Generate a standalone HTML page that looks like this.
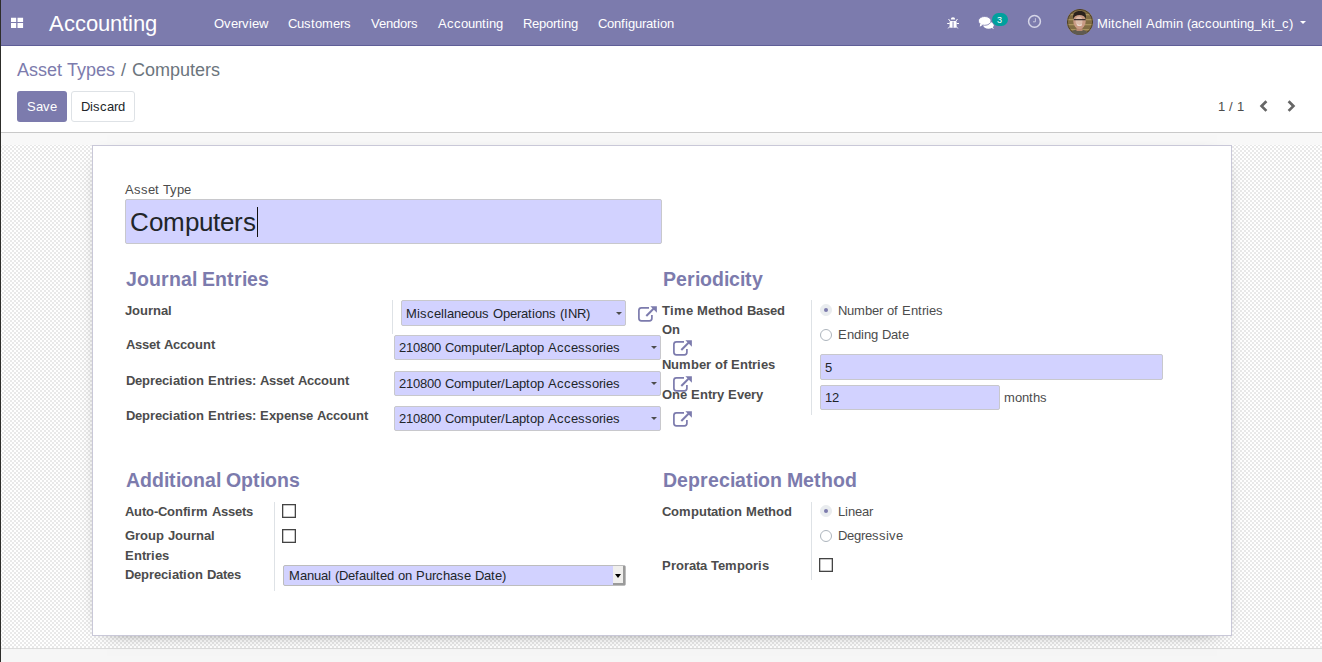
<!DOCTYPE html>
<html><head><meta charset="utf-8">
<style>
*{box-sizing:border-box;margin:0;padding:0}
html,body{width:1322px;height:662px;overflow:hidden;background:#fff}
body{font-family:"Liberation Sans",sans-serif;font-size:13px;color:#4c4c4c;position:relative}
.a{position:absolute;white-space:nowrap;line-height:normal}
#nav{position:absolute;left:0;top:0;width:1322px;height:46px;background:#7c7bad;border-bottom:1px solid #5f5e97}
#nav .t{position:absolute;color:#fff;font-size:13px;top:16px;line-height:normal;white-space:nowrap}
#lb{position:absolute;left:0;top:0;width:1px;height:662px;background:#2d2d2a}
#cp{position:absolute;left:0;top:46px;width:1322px;height:87px;background:#fff;border-bottom:1px solid #c9c9c9}
#band{position:absolute;left:0;top:133px;width:1322px;height:12px;background:#f8f8f8}
#bg{position:absolute;left:0;top:145px;width:1322px;height:503px;background-color:#fff;
 background-image:repeating-conic-gradient(#e9e9e9 0% 25%,#fff 0% 50%);background-size:4px 4px;background-position:0 -1px}
#foot{position:absolute;left:0;top:648px;width:1322px;height:14px;background:#f6f6f6;border-top:1px solid #dcdcdc}
#sheet{position:absolute;left:92px;top:145px;width:1140px;height:491px;background:#fff;border:1px solid #c9c8d8;box-shadow:0 5px 20px -15px #000}
.lbl{position:absolute;font-weight:bold;color:#4c4c4c;font-size:13px;line-height:normal;white-space:nowrap}
.h{position:absolute;font-weight:bold;color:#7c7bad;font-size:19.5px;line-height:normal;white-space:nowrap}
.inp{position:absolute;background:#d2d2ff;border:1px solid #c8c8cc;border-radius:2px}
.tx{position:absolute;font-size:13px;color:#212529;line-height:normal;white-space:nowrap}
.car{position:absolute;width:0;height:0;border-left:3px solid transparent;border-right:3px solid transparent;border-top:3px solid #4c4c4c}
.vl{position:absolute;width:1px;background:#dee2e6}
.rt{position:absolute;font-size:13px;color:#4c4c4c;line-height:normal;white-space:nowrap}
.rd{position:absolute;width:12px;height:12px;border:1px solid #adb5bd;border-radius:50%;background:#fff}
.rd.on{background:#e9ecef;border-color:#e9ecef}
.rd.on::after{content:"";position:absolute;left:3px;top:3px;width:4px;height:4px;border-radius:50%;background:#7c7bad}
i{display:inline-block;font-style:normal;text-align:left}
svg.ic{position:absolute;overflow:visible}
</style></head><body>
<div id="nav">
  <svg class="ic" style="left:0;top:0" width="30" height="30" viewBox="0 0 30 30"><path d="M11 17.8H16.2V22.1H11ZM17.5 17.8H23.1V22.1H17.5ZM11 23H16.2V28H11ZM17.5 23H23.1V28H17.5Z" fill="#fff"/></svg>
  <div class="a" style="left:49px;top:11px;font-size:22px;color:#fff"><i style="width:15px">A</i><i style="width:11px">c</i><i style="width:11px">c</i><i style="width:12px">o</i><i style="width:12px">u</i><i style="width:12px">n</i><i style="width:6px">t</i><i style="width:5px">i</i><i style="width:12px">n</i><i style="width:12px">g</i></div>
  <div class="t" style="left:214px"><i style="width:10px">O</i><i style="width:7px">v</i><i style="width:7px">e</i><i style="width:4px">r</i><i style="width:7px">v</i><i style="width:3px">i</i><i style="width:7px">e</i><i style="width:9px">w</i></div>
  <div class="t" style="left:288px"><i style="width:9px">C</i><i style="width:7px">u</i><i style="width:7px">s</i><i style="width:4px">t</i><i style="width:7px">o</i><i style="width:11px">m</i><i style="width:7px">e</i><i style="width:4px">r</i><i style="width:7px">s</i></div>
  <div class="t" style="left:371px"><i style="width:8px">V</i><i style="width:7px">e</i><i style="width:7px">n</i><i style="width:7px">d</i><i style="width:7px">o</i><i style="width:4px">r</i><i style="width:7px">s</i></div>
  <div class="t" style="left:438px"><i style="width:9px">A</i><i style="width:7px">c</i><i style="width:7px">c</i><i style="width:7px">o</i><i style="width:7px">u</i><i style="width:7px">n</i><i style="width:4px">t</i><i style="width:3px">i</i><i style="width:7px">n</i><i style="width:7px">g</i></div>
  <div class="t" style="left:523px"><i style="width:9px">R</i><i style="width:7px">e</i><i style="width:7px">p</i><i style="width:7px">o</i><i style="width:4px">r</i><i style="width:4px">t</i><i style="width:3px">i</i><i style="width:7px">n</i><i style="width:7px">g</i></div>
  <div class="t" style="left:598px"><i style="width:9px">C</i><i style="width:7px">o</i><i style="width:7px">n</i><i style="width:4px">f</i><i style="width:3px">i</i><i style="width:7px">g</i><i style="width:7px">u</i><i style="width:4px">r</i><i style="width:7px">a</i><i style="width:4px">t</i><i style="width:3px">i</i><i style="width:7px">o</i><i style="width:7px">n</i></div>

  <svg class="ic" style="left:946px;top:16px" width="14" height="14" viewBox="0 0 14 14">
    <path d="M4.8 3.4A2.2 2.2 0 0 1 9.2 3.4Z" fill="#fff"/>
    <rect x="3.6" y="4.9" width="7" height="6.9" rx="1.2" fill="#fff"/>
    <rect x="6.6" y="5.6" width="0.9" height="6.2" fill="#7c7bad"/>
    <path d="M2.5 3L4.2 5.2M11.5 3L9.8 5.2M1.2 7.5H3.6M10.6 7.5H13M2.2 12.4L4 10.4M11.8 12.4L10 10.4" stroke="#fff" stroke-width="1"/>
  </svg>
  <svg class="ic" style="left:978px;top:16px" width="18" height="14" viewBox="0 0 18 14">
    <ellipse cx="10.5" cy="9.2" rx="5.2" ry="3.6" fill="#fff"/>
    <path d="M13 11.5L16 13.2L14.2 10.2Z" fill="#fff"/>
    <ellipse cx="6.7" cy="4.9" rx="6.3" ry="4.4" fill="#fff" stroke="#7c7bad" stroke-width="0.8"/>
    <path d="M2.2 7.5L1.8 10.8L5 8.8Z" fill="#fff"/>
  </svg>
  <div class="a" style="left:992px;top:12.8px;width:16px;height:13.5px;border-radius:7px;background:#00a09d;color:#fff;font-size:9px;line-height:15px;padding-right:1px;text-align:center"><i style="width:5px">3</i></div>
  <svg class="ic" style="left:1027px;top:14px" width="15" height="15" viewBox="0 0 15 15">
    <circle cx="7.5" cy="7.4" r="5.9" fill="none" stroke="#d6d6e8" stroke-width="1.5"/>
    <path d="M8.4 4.2V7.8H6" fill="none" stroke="#cfcfe2" stroke-width="0.9"/>
  </svg>
  <svg class="ic" style="left:1067px;top:9px" width="26" height="26" viewBox="0 0 26 26">
    <defs><clipPath id="cl"><circle cx="13" cy="13" r="13"/></clipPath></defs>
    <g clip-path="url(#cl)">
      <rect width="26" height="26" fill="#806c42"/>
      <rect x="0" y="5" width="26" height="1.3" fill="#a8925e"/>
      <rect x="0" y="10" width="26" height="1.3" fill="#a8925e"/>
      <rect x="0" y="15" width="26" height="1.3" fill="#a8925e"/>
      <rect x="0" y="20" width="26" height="1.3" fill="#a8925e"/>
      <circle cx="13" cy="13" r="12.6" fill="none" stroke="#4a3e2a" stroke-width="1"/>
      <path d="M2 27C3 22 7 20.5 12 20.5S21 22 22 27Z" fill="#5f5a50"/>
      <rect x="9.5" y="17" width="6" height="5" fill="#b88870"/>
      <ellipse cx="12.5" cy="12.5" rx="6.2" ry="7.4" fill="#c99a84"/>
      <ellipse cx="12" cy="12" rx="3.5" ry="4.5" fill="#dcbcaa"/>
      <path d="M6 10C5.5 4 8.5 2 13 2S19.5 4 19 10C18 7 15.5 6 12.5 6S7 7 6 10Z" fill="#2a221c"/>
      <path d="M6.8 10.6H18.6" stroke="#3a3030" stroke-width="1.1"/>
      <path d="M10 15.8Q12.5 17.3 15 15.8" stroke="#f2ece6" stroke-width="1" fill="none"/>
    </g>
  </svg>
  <div class="car" style="left:1300px;top:21px;border-left-width:3px;border-right-width:3px;border-top:3px solid #fff"></div>
  <div class="t" style="left:1097px"><i style="width:11px">M</i><i style="width:3px">i</i><i style="width:4px">t</i><i style="width:7px">c</i><i style="width:7px">h</i><i style="width:7px">e</i><i style="width:3px">l</i><i style="width:3px">l</i><i style="width:4px">&nbsp;</i><i style="width:9px">A</i><i style="width:7px">d</i><i style="width:11px">m</i><i style="width:3px">i</i><i style="width:7px">n</i><i style="width:4px">&nbsp;</i><i style="width:4px">(</i><i style="width:7px">a</i><i style="width:7px">c</i><i style="width:7px">c</i><i style="width:7px">o</i><i style="width:7px">u</i><i style="width:7px">n</i><i style="width:4px">t</i><i style="width:3px">i</i><i style="width:7px">n</i><i style="width:7px">g</i><i style="width:7px">_</i><i style="width:7px">k</i><i style="width:3px">i</i><i style="width:4px">t</i><i style="width:7px">_</i><i style="width:7px">c</i><i style="width:4px">)</i></div>
</div>
<div id="cp">
  <div class="a" style="left:17px;top:14px;font-size:18px"><span style="color:#7c7bad"><i style="width:12px">A</i><i style="width:9px">s</i><i style="width:9px">s</i><i style="width:10px">e</i><i style="width:5px">t</i><i style="width:5px">&nbsp;</i><i style="width:10px">T</i><i style="width:9px">y</i><i style="width:10px">p</i><i style="width:10px">e</i><i style="width:9px">s</i></span></div>
  <div class="a" style="left:121px;top:14px;font-size:18px;color:#6c757d"><i style="width:5px">/</i></div>
  <div class="a" style="left:132px;top:14px;font-size:18px;color:#6c757d"><i style="width:13px">C</i><i style="width:10px">o</i><i style="width:15px">m</i><i style="width:10px">p</i><i style="width:10px">u</i><i style="width:5px">t</i><i style="width:10px">e</i><i style="width:6px">r</i><i style="width:9px">s</i></div>
  <div class="a" style="left:17px;top:45px;width:50px;height:31px;background:#7c7bad;border-radius:3px;color:#fff;line-height:31px;text-align:center"><i style="width:9px">S</i><i style="width:7px">a</i><i style="width:7px">v</i><i style="width:7px">e</i></div>
  <div class="a" style="left:71px;top:45px;width:64px;height:31px;background:#fff;border:1px solid #dee2e6;border-radius:3px;color:#212529;line-height:29px;text-align:center"><i style="width:9px">D</i><i style="width:3px">i</i><i style="width:7px">s</i><i style="width:7px">c</i><i style="width:7px">a</i><i style="width:4px">r</i><i style="width:7px">d</i></div>
  <div class="a" style="left:1218px;top:53px;color:#4c4c4c"><i style="width:7px">1</i><i style="width:4px">&nbsp;</i><i style="width:4px">/</i><i style="width:4px">&nbsp;</i><i style="width:7px">1</i></div>
  <svg class="ic" style="left:1259px;top:53px" width="10" height="13" viewBox="0 0 10 13"><path d="M7.4 2.3L2.6 7.1L7.4 11.9" fill="none" stroke="#666" stroke-width="2.7"/></svg>
  <svg class="ic" style="left:1287px;top:53px" width="10" height="13" viewBox="0 0 10 13"><path d="M1.6 2.3L6.4 7.1L1.6 11.9" fill="none" stroke="#666" stroke-width="2.7"/></svg>

</div>
<div id="band"></div>
<div id="bg"></div>
<div id="foot"></div>
<div id="sheet"></div>

<div class="rt" style="left:125px;top:182px"><i style="width:9px">A</i><i style="width:7px">s</i><i style="width:7px">s</i><i style="width:7px">e</i><i style="width:4px">t</i><i style="width:4px">&nbsp;</i><i style="width:7px">T</i><i style="width:7px">y</i><i style="width:7px">p</i><i style="width:7px">e</i></div>
<div class="inp" style="left:125px;top:199px;width:537px;height:45px"></div>
<div class="a" style="left:130px;top:207px;font-size:26px;color:#212529"><i style="width:19px">C</i><i style="width:14px">o</i><i style="width:22px">m</i><i style="width:14px">p</i><i style="width:14px">u</i><i style="width:7px">t</i><i style="width:14px">e</i><i style="width:9px">r</i><i style="width:13px">s</i></div>
<div class="a" style="left:257px;top:207px;width:1px;height:30px;background:#111"></div>

<div class="h" style="left:126px;top:268px"><i style="width:11px">J</i><i style="width:12px">o</i><i style="width:12px">u</i><i style="width:8px">r</i><i style="width:12px">n</i><i style="width:11px">a</i><i style="width:5px">l</i><i style="width:5px">&nbsp;</i><i style="width:13px">E</i><i style="width:12px">n</i><i style="width:7px">t</i><i style="width:8px">r</i><i style="width:5px">i</i><i style="width:11px">e</i><i style="width:11px">s</i></div>
<div class="h" style="left:663px;top:268px"><i style="width:13px">P</i><i style="width:11px">e</i><i style="width:8px">r</i><i style="width:5px">i</i><i style="width:12px">o</i><i style="width:12px">d</i><i style="width:5px">i</i><i style="width:11px">c</i><i style="width:5px">i</i><i style="width:7px">t</i><i style="width:11px">y</i></div>

<div class="lbl" style="left:125px;top:303px"><i style="width:7px">J</i><i style="width:8px">o</i><i style="width:8px">u</i><i style="width:5px">r</i><i style="width:8px">n</i><i style="width:7px">a</i><i style="width:4px">l</i></div>
<div class="vl" style="left:392px;top:300px;height:34px"></div>
<div class="inp" style="left:401px;top:300px;width:225px;height:26px"></div>
<div class="tx" style="left:406px;top:306px"><i style="width:11px">M</i><i style="width:3px">i</i><i style="width:7px">s</i><i style="width:7px">c</i><i style="width:7px">e</i><i style="width:3px">l</i><i style="width:3px">l</i><i style="width:7px">a</i><i style="width:7px">n</i><i style="width:7px">e</i><i style="width:7px">o</i><i style="width:7px">u</i><i style="width:7px">s</i><i style="width:4px">&nbsp;</i><i style="width:10px">O</i><i style="width:7px">p</i><i style="width:7px">e</i><i style="width:4px">r</i><i style="width:7px">a</i><i style="width:4px">t</i><i style="width:3px">i</i><i style="width:7px">o</i><i style="width:7px">n</i><i style="width:7px">s</i><i style="width:4px">&nbsp;</i><i style="width:4px">(</i><i style="width:4px">I</i><i style="width:9px">N</i><i style="width:9px">R</i><i style="width:4px">)</i></div>
<div class="car" style="left:616px;top:312px"></div>
<svg class="ic" style="left:637px;top:305px" width="21" height="18" viewBox="0 0 21 18"><path d="M12 2.8H4.4A2.5 2.5 0 0 0 1.9 5.3V13.3A2.5 2.5 0 0 0 4.4 15.8H12.4A2.5 2.5 0 0 0 14.9 13.3V10" fill="none" stroke="#7c7bad" stroke-width="1.7"/><path d="M13.4 1.2H19.9V7.7Z" fill="#7c7bad"/><path d="M9.3 11L16.5 3.8" stroke="#7c7bad" stroke-width="2"/></svg>

<div class="lbl" style="left:126px;top:337px"><i style="width:9px">A</i><i style="width:7px">s</i><i style="width:7px">s</i><i style="width:7px">e</i><i style="width:4px">t</i><i style="width:4px">&nbsp;</i><i style="width:9px">A</i><i style="width:7px">c</i><i style="width:7px">c</i><i style="width:8px">o</i><i style="width:8px">u</i><i style="width:8px">n</i><i style="width:4px">t</i></div>
<div class="inp" style="left:394px;top:335px;width:267px;height:25px"></div>
<div class="tx" style="left:399px;top:340px"><i style="width:7px">2</i><i style="width:7px">1</i><i style="width:7px">0</i><i style="width:7px">8</i><i style="width:7px">0</i><i style="width:7px">0</i><i style="width:4px">&nbsp;</i><i style="width:9px">C</i><i style="width:7px">o</i><i style="width:11px">m</i><i style="width:7px">p</i><i style="width:7px">u</i><i style="width:4px">t</i><i style="width:7px">e</i><i style="width:4px">r</i><i style="width:4px">/</i><i style="width:7px">L</i><i style="width:7px">a</i><i style="width:7px">p</i><i style="width:4px">t</i><i style="width:7px">o</i><i style="width:7px">p</i><i style="width:4px">&nbsp;</i><i style="width:9px">A</i><i style="width:7px">c</i><i style="width:7px">c</i><i style="width:7px">e</i><i style="width:7px">s</i><i style="width:7px">s</i><i style="width:7px">o</i><i style="width:4px">r</i><i style="width:3px">i</i><i style="width:7px">e</i><i style="width:7px">s</i></div>
<div class="car" style="left:651px;top:346px"></div>
<svg class="ic" style="left:672px;top:339px" width="21" height="18" viewBox="0 0 21 18"><path d="M12 2.8H4.4A2.5 2.5 0 0 0 1.9 5.3V13.3A2.5 2.5 0 0 0 4.4 15.8H12.4A2.5 2.5 0 0 0 14.9 13.3V10" fill="none" stroke="#7c7bad" stroke-width="1.7"/><path d="M13.4 1.2H19.9V7.7Z" fill="#7c7bad"/><path d="M9.3 11L16.5 3.8" stroke="#7c7bad" stroke-width="2"/></svg>

<div class="lbl" style="left:126px;top:373px"><i style="width:9px">D</i><i style="width:7px">e</i><i style="width:8px">p</i><i style="width:5px">r</i><i style="width:7px">e</i><i style="width:7px">c</i><i style="width:4px">i</i><i style="width:7px">a</i><i style="width:4px">t</i><i style="width:4px">i</i><i style="width:8px">o</i><i style="width:8px">n</i><i style="width:4px">&nbsp;</i><i style="width:9px">E</i><i style="width:8px">n</i><i style="width:4px">t</i><i style="width:5px">r</i><i style="width:4px">i</i><i style="width:7px">e</i><i style="width:7px">s</i><i style="width:4px">:</i><i style="width:4px">&nbsp;</i><i style="width:9px">A</i><i style="width:7px">s</i><i style="width:7px">s</i><i style="width:7px">e</i><i style="width:4px">t</i><i style="width:4px">&nbsp;</i><i style="width:9px">A</i><i style="width:7px">c</i><i style="width:7px">c</i><i style="width:8px">o</i><i style="width:8px">u</i><i style="width:8px">n</i><i style="width:4px">t</i></div>
<div class="inp" style="left:394px;top:371px;width:267px;height:25px"></div>
<div class="tx" style="left:399px;top:376px"><i style="width:7px">2</i><i style="width:7px">1</i><i style="width:7px">0</i><i style="width:7px">8</i><i style="width:7px">0</i><i style="width:7px">0</i><i style="width:4px">&nbsp;</i><i style="width:9px">C</i><i style="width:7px">o</i><i style="width:11px">m</i><i style="width:7px">p</i><i style="width:7px">u</i><i style="width:4px">t</i><i style="width:7px">e</i><i style="width:4px">r</i><i style="width:4px">/</i><i style="width:7px">L</i><i style="width:7px">a</i><i style="width:7px">p</i><i style="width:4px">t</i><i style="width:7px">o</i><i style="width:7px">p</i><i style="width:4px">&nbsp;</i><i style="width:9px">A</i><i style="width:7px">c</i><i style="width:7px">c</i><i style="width:7px">e</i><i style="width:7px">s</i><i style="width:7px">s</i><i style="width:7px">o</i><i style="width:4px">r</i><i style="width:3px">i</i><i style="width:7px">e</i><i style="width:7px">s</i></div>
<div class="car" style="left:651px;top:382px"></div>
<svg class="ic" style="left:672px;top:375px" width="21" height="18" viewBox="0 0 21 18"><path d="M12 2.8H4.4A2.5 2.5 0 0 0 1.9 5.3V13.3A2.5 2.5 0 0 0 4.4 15.8H12.4A2.5 2.5 0 0 0 14.9 13.3V10" fill="none" stroke="#7c7bad" stroke-width="1.7"/><path d="M13.4 1.2H19.9V7.7Z" fill="#7c7bad"/><path d="M9.3 11L16.5 3.8" stroke="#7c7bad" stroke-width="2"/></svg>

<div class="lbl" style="left:126px;top:408px"><i style="width:9px">D</i><i style="width:7px">e</i><i style="width:8px">p</i><i style="width:5px">r</i><i style="width:7px">e</i><i style="width:7px">c</i><i style="width:4px">i</i><i style="width:7px">a</i><i style="width:4px">t</i><i style="width:4px">i</i><i style="width:8px">o</i><i style="width:8px">n</i><i style="width:4px">&nbsp;</i><i style="width:9px">E</i><i style="width:8px">n</i><i style="width:4px">t</i><i style="width:5px">r</i><i style="width:4px">i</i><i style="width:7px">e</i><i style="width:7px">s</i><i style="width:4px">:</i><i style="width:4px">&nbsp;</i><i style="width:9px">E</i><i style="width:7px">x</i><i style="width:8px">p</i><i style="width:7px">e</i><i style="width:8px">n</i><i style="width:7px">s</i><i style="width:7px">e</i><i style="width:4px">&nbsp;</i><i style="width:9px">A</i><i style="width:7px">c</i><i style="width:7px">c</i><i style="width:8px">o</i><i style="width:8px">u</i><i style="width:8px">n</i><i style="width:4px">t</i></div>
<div class="inp" style="left:394px;top:406px;width:267px;height:25px"></div>
<div class="tx" style="left:399px;top:411px"><i style="width:7px">2</i><i style="width:7px">1</i><i style="width:7px">0</i><i style="width:7px">8</i><i style="width:7px">0</i><i style="width:7px">0</i><i style="width:4px">&nbsp;</i><i style="width:9px">C</i><i style="width:7px">o</i><i style="width:11px">m</i><i style="width:7px">p</i><i style="width:7px">u</i><i style="width:4px">t</i><i style="width:7px">e</i><i style="width:4px">r</i><i style="width:4px">/</i><i style="width:7px">L</i><i style="width:7px">a</i><i style="width:7px">p</i><i style="width:4px">t</i><i style="width:7px">o</i><i style="width:7px">p</i><i style="width:4px">&nbsp;</i><i style="width:9px">A</i><i style="width:7px">c</i><i style="width:7px">c</i><i style="width:7px">e</i><i style="width:7px">s</i><i style="width:7px">s</i><i style="width:7px">o</i><i style="width:4px">r</i><i style="width:3px">i</i><i style="width:7px">e</i><i style="width:7px">s</i></div>
<div class="car" style="left:651px;top:417px"></div>
<svg class="ic" style="left:672px;top:410px" width="21" height="18" viewBox="0 0 21 18"><path d="M12 2.8H4.4A2.5 2.5 0 0 0 1.9 5.3V13.3A2.5 2.5 0 0 0 4.4 15.8H12.4A2.5 2.5 0 0 0 14.9 13.3V10" fill="none" stroke="#7c7bad" stroke-width="1.7"/><path d="M13.4 1.2H19.9V7.7Z" fill="#7c7bad"/><path d="M9.3 11L16.5 3.8" stroke="#7c7bad" stroke-width="2"/></svg>

<div class="lbl" style="left:662px;top:303px"><i style="width:8px">T</i><i style="width:4px">i</i><i style="width:12px">m</i><i style="width:7px">e</i><i style="width:4px">&nbsp;</i><i style="width:11px">M</i><i style="width:7px">e</i><i style="width:4px">t</i><i style="width:8px">h</i><i style="width:8px">o</i><i style="width:8px">d</i><i style="width:4px">&nbsp;</i><i style="width:9px">B</i><i style="width:7px">a</i><i style="width:7px">s</i><i style="width:7px">e</i><i style="width:8px">d</i></div>
<div class="lbl" style="left:662px;top:322px"><i style="width:10px">O</i><i style="width:8px">n</i></div>
<div class="lbl" style="left:662px;top:357px"><i style="width:9px">N</i><i style="width:8px">u</i><i style="width:12px">m</i><i style="width:8px">b</i><i style="width:7px">e</i><i style="width:5px">r</i><i style="width:4px">&nbsp;</i><i style="width:8px">o</i><i style="width:4px">f</i><i style="width:4px">&nbsp;</i><i style="width:9px">E</i><i style="width:8px">n</i><i style="width:4px">t</i><i style="width:5px">r</i><i style="width:4px">i</i><i style="width:7px">e</i><i style="width:7px">s</i></div>
<div class="lbl" style="left:662px;top:387px"><i style="width:10px">O</i><i style="width:8px">n</i><i style="width:7px">e</i><i style="width:4px">&nbsp;</i><i style="width:9px">E</i><i style="width:8px">n</i><i style="width:4px">t</i><i style="width:5px">r</i><i style="width:7px">y</i><i style="width:4px">&nbsp;</i><i style="width:9px">E</i><i style="width:7px">v</i><i style="width:7px">e</i><i style="width:5px">r</i><i style="width:7px">y</i></div>
<div class="vl" style="left:811px;top:300px;height:115px"></div>
<div class="rd on" style="left:820px;top:304px"></div>
<div class="rt" style="left:838px;top:303px"><i style="width:9px">N</i><i style="width:7px">u</i><i style="width:11px">m</i><i style="width:7px">b</i><i style="width:7px">e</i><i style="width:4px">r</i><i style="width:4px">&nbsp;</i><i style="width:7px">o</i><i style="width:4px">f</i><i style="width:4px">&nbsp;</i><i style="width:9px">E</i><i style="width:7px">n</i><i style="width:4px">t</i><i style="width:4px">r</i><i style="width:3px">i</i><i style="width:7px">e</i><i style="width:7px">s</i></div>
<div class="rd" style="left:820px;top:329px"></div>
<div class="rt" style="left:838px;top:327px"><i style="width:9px">E</i><i style="width:7px">n</i><i style="width:7px">d</i><i style="width:3px">i</i><i style="width:7px">n</i><i style="width:7px">g</i><i style="width:4px">&nbsp;</i><i style="width:9px">D</i><i style="width:7px">a</i><i style="width:4px">t</i><i style="width:7px">e</i></div>
<div class="inp" style="left:820px;top:354px;width:343px;height:26px"></div>
<div class="tx" style="left:825px;top:360px"><i style="width:7px">5</i></div>
<div class="inp" style="left:820px;top:385px;width:180px;height:25px"></div>
<div class="tx" style="left:825px;top:390px"><i style="width:7px">1</i><i style="width:7px">2</i></div>
<div class="rt" style="left:1004px;top:390px"><i style="width:11px">m</i><i style="width:7px">o</i><i style="width:7px">n</i><i style="width:4px">t</i><i style="width:7px">h</i><i style="width:7px">s</i></div>

<div class="h" style="left:126px;top:469px"><i style="width:14px">A</i><i style="width:12px">d</i><i style="width:12px">d</i><i style="width:5px">i</i><i style="width:7px">t</i><i style="width:5px">i</i><i style="width:12px">o</i><i style="width:12px">n</i><i style="width:11px">a</i><i style="width:5px">l</i><i style="width:5px">&nbsp;</i><i style="width:15px">O</i><i style="width:12px">p</i><i style="width:7px">t</i><i style="width:5px">i</i><i style="width:12px">o</i><i style="width:12px">n</i><i style="width:11px">s</i></div>
<div class="h" style="left:663px;top:469px"><i style="width:14px">D</i><i style="width:11px">e</i><i style="width:12px">p</i><i style="width:8px">r</i><i style="width:11px">e</i><i style="width:11px">c</i><i style="width:5px">i</i><i style="width:11px">a</i><i style="width:7px">t</i><i style="width:5px">i</i><i style="width:12px">o</i><i style="width:12px">n</i><i style="width:5px">&nbsp;</i><i style="width:16px">M</i><i style="width:11px">e</i><i style="width:7px">t</i><i style="width:12px">h</i><i style="width:12px">o</i><i style="width:12px">d</i></div>
<div class="lbl" style="left:125px;top:504px"><i style="width:9px">A</i><i style="width:8px">u</i><i style="width:4px">t</i><i style="width:8px">o</i><i style="width:4px">-</i><i style="width:9px">C</i><i style="width:8px">o</i><i style="width:8px">n</i><i style="width:4px">f</i><i style="width:4px">i</i><i style="width:5px">r</i><i style="width:12px">m</i><i style="width:4px">&nbsp;</i><i style="width:9px">A</i><i style="width:7px">s</i><i style="width:7px">s</i><i style="width:7px">e</i><i style="width:4px">t</i><i style="width:7px">s</i></div>
<div class="lbl" style="left:125px;top:528px"><i style="width:10px">G</i><i style="width:5px">r</i><i style="width:8px">o</i><i style="width:8px">u</i><i style="width:8px">p</i><i style="width:4px">&nbsp;</i><i style="width:7px">J</i><i style="width:8px">o</i><i style="width:8px">u</i><i style="width:5px">r</i><i style="width:8px">n</i><i style="width:7px">a</i><i style="width:4px">l</i></div>
<div class="lbl" style="left:125px;top:548px"><i style="width:9px">E</i><i style="width:8px">n</i><i style="width:4px">t</i><i style="width:5px">r</i><i style="width:4px">i</i><i style="width:7px">e</i><i style="width:7px">s</i></div>
<div class="lbl" style="left:125px;top:567px"><i style="width:9px">D</i><i style="width:7px">e</i><i style="width:8px">p</i><i style="width:5px">r</i><i style="width:7px">e</i><i style="width:7px">c</i><i style="width:4px">i</i><i style="width:7px">a</i><i style="width:4px">t</i><i style="width:4px">i</i><i style="width:8px">o</i><i style="width:8px">n</i><i style="width:4px">&nbsp;</i><i style="width:9px">D</i><i style="width:7px">a</i><i style="width:4px">t</i><i style="width:7px">e</i><i style="width:7px">s</i></div>
<div class="vl" style="left:274px;top:502px;height:89px"></div>
<svg class="ic" style="left:282px;top:504px" width="14" height="14"><rect x="0.65" y="0.65" width="12.7" height="12.7" fill="#fff" stroke="#444" stroke-width="1.3"/></svg>
<svg class="ic" style="left:282px;top:529px" width="14" height="14"><rect x="0.65" y="0.65" width="12.7" height="12.7" fill="#fff" stroke="#444" stroke-width="1.3"/></svg>
<div class="inp" style="left:283px;top:565px;width:343px;height:21px;border-radius:2px;border-color:#bdbdbd"></div>
<div class="a" style="left:613px;top:566px;width:12px;height:19px;background:#f0efed;border-right:2px solid #9a9a9a;border-bottom:2px solid #9a9a9a"></div>
<div class="car" style="left:614.5px;top:574px;border-left-width:3.5px;border-right-width:3.5px;border-top-width:4px;border-top-color:#000"></div>
<div class="tx" style="left:289px;top:568px"><i style="width:11px">M</i><i style="width:7px">a</i><i style="width:7px">n</i><i style="width:7px">u</i><i style="width:7px">a</i><i style="width:3px">l</i><i style="width:4px">&nbsp;</i><i style="width:4px">(</i><i style="width:9px">D</i><i style="width:7px">e</i><i style="width:4px">f</i><i style="width:7px">a</i><i style="width:7px">u</i><i style="width:3px">l</i><i style="width:4px">t</i><i style="width:7px">e</i><i style="width:7px">d</i><i style="width:4px">&nbsp;</i><i style="width:7px">o</i><i style="width:7px">n</i><i style="width:4px">&nbsp;</i><i style="width:9px">P</i><i style="width:7px">u</i><i style="width:4px">r</i><i style="width:7px">c</i><i style="width:7px">h</i><i style="width:7px">a</i><i style="width:7px">s</i><i style="width:7px">e</i><i style="width:4px">&nbsp;</i><i style="width:9px">D</i><i style="width:7px">a</i><i style="width:4px">t</i><i style="width:7px">e</i><i style="width:4px">)</i></div>

<div class="lbl" style="left:662px;top:504px"><i style="width:9px">C</i><i style="width:8px">o</i><i style="width:12px">m</i><i style="width:8px">p</i><i style="width:8px">u</i><i style="width:4px">t</i><i style="width:7px">a</i><i style="width:4px">t</i><i style="width:4px">i</i><i style="width:8px">o</i><i style="width:8px">n</i><i style="width:4px">&nbsp;</i><i style="width:11px">M</i><i style="width:7px">e</i><i style="width:4px">t</i><i style="width:8px">h</i><i style="width:8px">o</i><i style="width:8px">d</i></div>
<div class="lbl" style="left:662px;top:558px"><i style="width:9px">P</i><i style="width:5px">r</i><i style="width:8px">o</i><i style="width:5px">r</i><i style="width:7px">a</i><i style="width:4px">t</i><i style="width:7px">a</i><i style="width:4px">&nbsp;</i><i style="width:7px">T</i><i style="width:7px">e</i><i style="width:12px">m</i><i style="width:8px">p</i><i style="width:8px">o</i><i style="width:5px">r</i><i style="width:4px">i</i><i style="width:7px">s</i></div>
<div class="vl" style="left:811px;top:502px;height:78px"></div>
<div class="rd on" style="left:820px;top:505px"></div>
<div class="rt" style="left:838px;top:504px"><i style="width:7px">L</i><i style="width:3px">i</i><i style="width:7px">n</i><i style="width:7px">e</i><i style="width:7px">a</i><i style="width:4px">r</i></div>
<div class="rd" style="left:820px;top:530px"></div>
<div class="rt" style="left:838px;top:528px"><i style="width:9px">D</i><i style="width:7px">e</i><i style="width:7px">g</i><i style="width:4px">r</i><i style="width:7px">e</i><i style="width:7px">s</i><i style="width:7px">s</i><i style="width:3px">i</i><i style="width:7px">v</i><i style="width:7px">e</i></div>
<svg class="ic" style="left:819px;top:558px" width="14" height="14"><rect x="0.65" y="0.65" width="12.7" height="12.7" fill="#fff" stroke="#444" stroke-width="1.3"/></svg>

<div id="lb"></div>
</body></html>
